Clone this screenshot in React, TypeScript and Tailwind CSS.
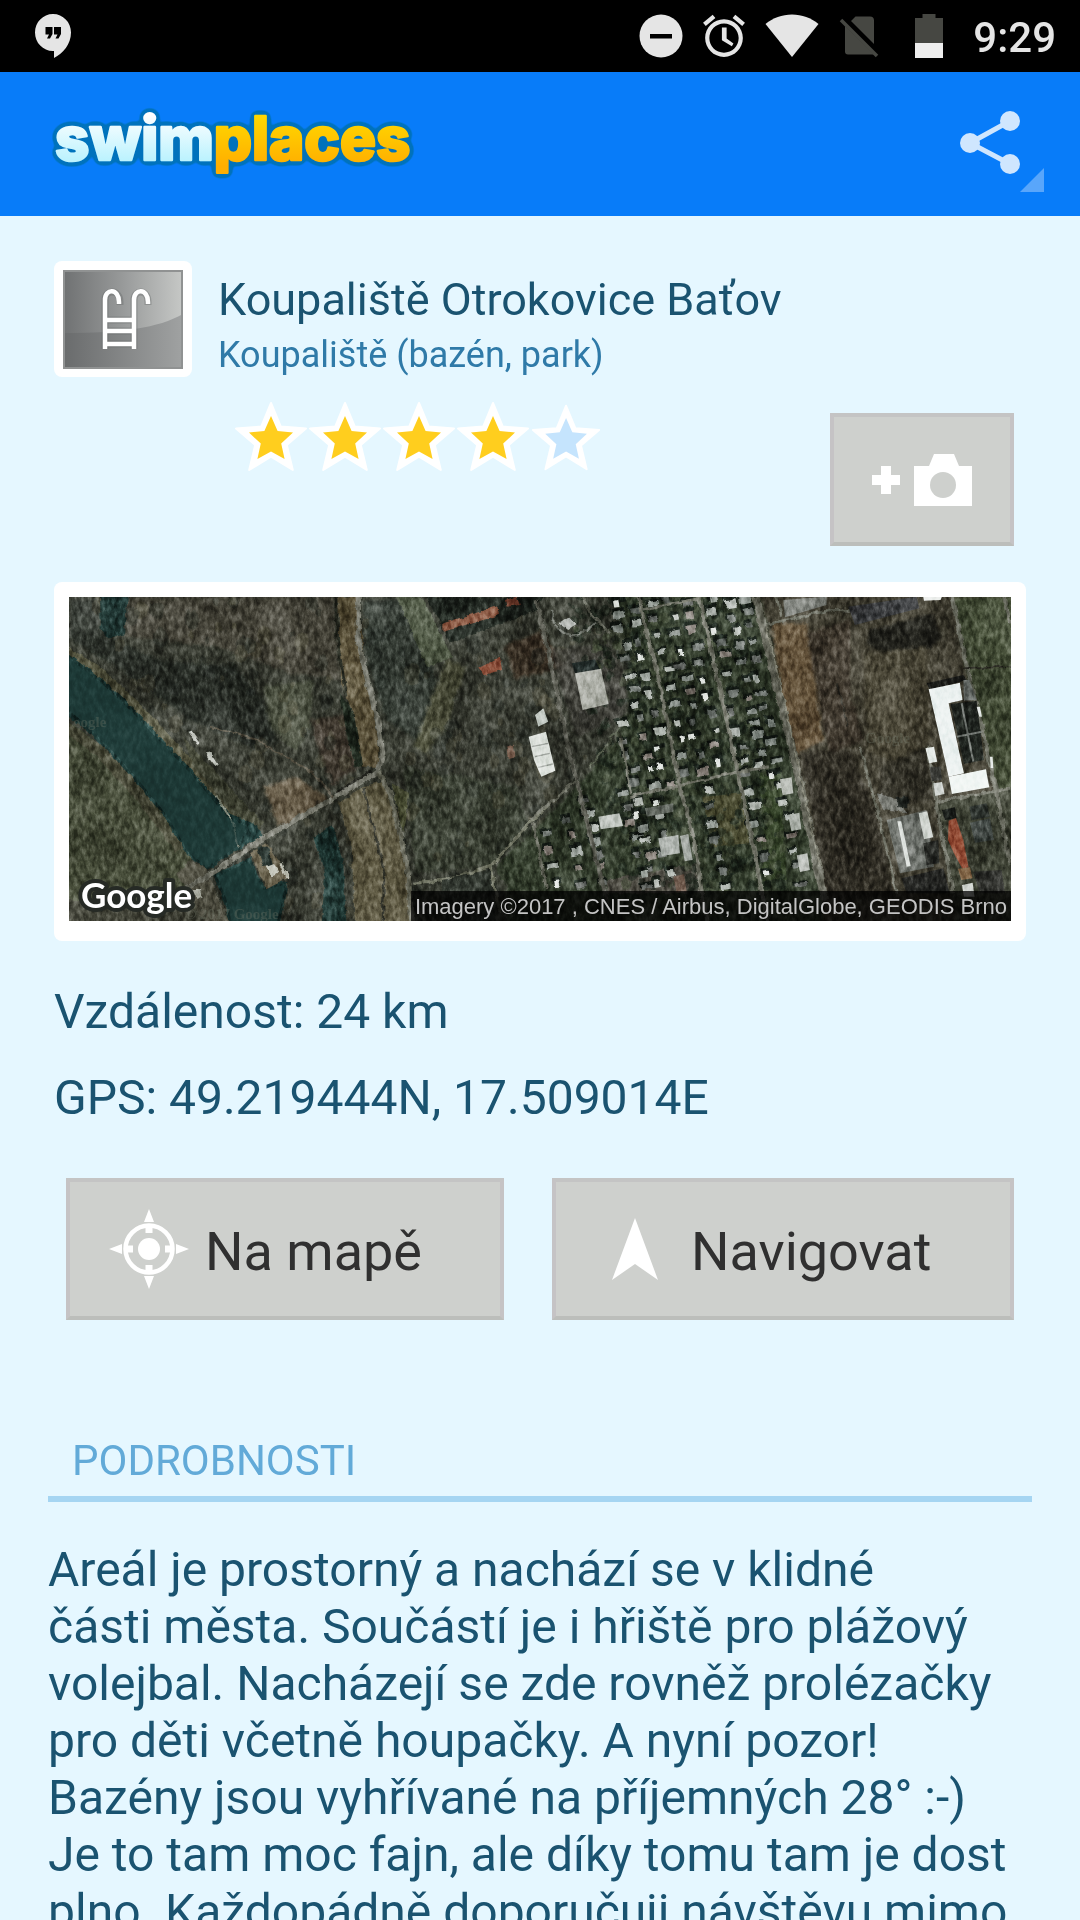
import type { ReactNode } from "react";

const STAR = "36,2 45.8,25.6 71,27.6 51.8,44 57.8,69 36,55.6 14.2,69 20.2,44 1,27.6 26.2,25.6";
const STAR_CORE = "36,15 42.6,30 58,31.6 46.2,42.6 49.6,58 36,50.4 22.4,58 25.8,42.6 14,31.6 29.4,30";

function Star({ filled }: { filled: boolean }) {
  return (
    <svg viewBox={filled ? "0 0 72 72" : "-1 -3 76 76"} className="size-[72px]" aria-hidden="true">
      <polygon points={STAR} fill="#fff" stroke="#fff" strokeWidth="2" strokeLinejoin="round" />
      <polygon points={STAR_CORE} fill={filled ? "#ffce1e" : "#c5e4fd"} />
    </svg>
  );
}

function StatusBar() {
  return (
    <div className="flex h-[72px] items-center justify-between bg-black pl-[35px] pr-6 text-[#e5e5e5]">
      <svg viewBox="0 0 36 44" className="h-11 w-9" aria-label="Hangouts">
        <path d="M18 0C8 0 0 8.200 0 18.500S8 37 18 37h1v7c9-4.500 17-14 17-25.500C36 8.200 28 0 18 0z" fill="#e5e5e5" />
        <path d="M10.500 13h7v7l-2.500 4.500h-3l2-4h-3.500zM19 13h7v7l-2.500 4.500h-3l2-4H19z" fill="#000" />
      </svg>
      <div className="flex items-center gap-5">
        <svg viewBox="0 0 44 44" className="size-11" aria-label="Nerušit">
          <circle cx="22" cy="22" r="21.500" fill="#e5e5e5" />
          <rect x="11" y="20" width="22" height="4.500" fill="#000" />
        </svg>
        <svg viewBox="2 1.500 20 21" className="h-11 w-[42px]" aria-label="Budík" fill="#e5e5e5">
          <path d="M22 5.720l-4.600-3.860-1.290 1.530 4.600 3.860L22 5.720zM7.880 3.390L6.600 1.860 2 5.710l1.290 1.530 4.590-3.850zM12.500 8H11v6l4.750 2.850.75-1.230-3.250-2.370V8zM12 4c-4.970 0-9 4.030-9 9s4.020 9 9 9c4.970 0 9-4.030 9-9s-4.030-9-9-9zm0 16c-3.870 0-7-3.130-7-7s3.130-7 7-7 7 3.130 7 7-3.130 7-7 7z" />
        </svg>
        <svg viewBox="0 0 54 44" className="h-11 w-[54px]" aria-label="Wi-Fi">
          <path d="M0.500 10C8 4 17 0.500 27 0.500S46 4 53.500 10L27 43z" fill="#e5e5e5" />
        </svg>
        <svg viewBox="0 0 40 44" className="h-11 w-10" aria-label="Bez SIM karty">
          <path d="M16.500 2.500H31a4 4 0 0 1 4 4v23.500L12 7zM6 12l29 28.500H9a3 3 0 0 1-3-3z" fill="#464742" />
          <path d="M2 6l36 36" stroke="#464742" strokeWidth="3.500" />
        </svg>
        <svg viewBox="0 0 28 44" className="ml-4 h-11 w-7" aria-label="Baterie">
          <path d="M7.500 0h13v4H28v26H0V4h7.500z" fill="#464742" />
          <rect y="29" width="28" height="15" fill="#eee" />
        </svg>
        <time className="ml-2.5 pt-1 font-medium text-[42px] leading-[50px]">9:29</time>
      </div>
    </div>
  );
}

function Logo() {
  return (
    <svg viewBox="0 0 380 84" className="h-[84px] w-[380px]" role="img" aria-label="swimplaces">
      <defs>
        <linearGradient id="ice" gradientUnits="userSpaceOnUse" x1="0" y1="12" x2="0" y2="60">
          <stop offset="0" stopColor="#ffffff" />
          <stop offset="1" stopColor="#b9f2fe" />
        </linearGradient>
        <linearGradient id="sun" gradientUnits="userSpaceOnUse" x1="0" y1="14" x2="0" y2="64">
          <stop offset="0" stopColor="#ffd800" />
          <stop offset="1" stopColor="#ffae00" />
        </linearGradient>
        <filter id="rim" x="-5%" y="-20%" width="110%" height="140%" colorInterpolationFilters="sRGB">
          <feGaussianBlur in="SourceAlpha" stdDeviation="3" result="halo" />
          <feComponentTransfer in="halo" result="edge">
            <feFuncA type="linear" slope="14" intercept="-0.700" />
          </feComponentTransfer>
          <feFlood floodColor="#0072bc" />
          <feComposite in2="edge" operator="in" result="outline" />
          <feMerge>
            <feMergeNode in="outline" />
            <feMergeNode in="SourceGraphic" />
          </feMerge>
        </filter>
      </defs>
      <text
        x="7"
        y="58"
        strokeWidth="2.500"
        strokeLinejoin="round"
        filter="url(#rim)"
        className="font-[Inter,sans-serif] text-[60px] font-extrabold"
      >
        <tspan fill="url(#ice)" stroke="url(#ice)">swim</tspan>
        <tspan fill="url(#sun)" stroke="url(#sun)">places</tspan>
      </text>
    </svg>
  );
}

function AppBar() {
  return (
    <header className="flex h-36 items-center justify-between bg-[#087cf9] pl-12 pr-9">
      <Logo />
      <button type="button" aria-label="Sdílet" className="flex">
        <svg viewBox="0 0 84 96" className="h-24 w-[84px]">
          <path d="M50 25L10 47l40 21" fill="none" stroke="#cfe6fe" strokeWidth="5" />
          <circle cx="50" cy="25" r="10" fill="#cfe6fe" />
          <circle cx="10" cy="47" r="10" fill="#cfe6fe" />
          <circle cx="50" cy="68" r="10" fill="#cfe6fe" />
          <path d="M84 72v24H60z" fill="#59a6fb" />
        </svg>
      </button>
    </header>
  );
}

function PoolIcon() {
  return (
    <svg viewBox="0 0 120 99" className="h-[99px] w-[120px]" role="img" aria-label="Koupaliště">
      <defs>
        <linearGradient id="plate">
          <stop offset="0" stopColor="#696b6c" />
          <stop offset="1" stopColor="#a0a2a2" />
        </linearGradient>
        <linearGradient id="gloss">
          <stop offset="0" stopColor="#6f7172" />
          <stop offset="0.500" stopColor="#989a9a" />
          <stop offset="1" stopColor="#c6c8c6" />
        </linearGradient>
      </defs>
      <rect width="120" height="99" fill="url(#plate)" />
      <path d="M0 0h120v44C95 58 60 63 0 63z" fill="url(#gloss)" />
      <rect x="1" y="1" width="118" height="97" fill="none" stroke="#909292" strokeWidth="2" />
      <g fill="none" stroke="#5f6162" strokeOpacity="0.350" strokeWidth="7">
        <path d="M42 79V30c0-11 15-11 15 2v3M71 79V30c0-11 14-11 14 2v3M42 50h29M42 61h29M42 74h29" />
      </g>
      <g fill="none" stroke="#fff" strokeWidth="4.500">
        <path d="M42 79V30c0-12 14-12 14 2v2M71 79V30c0-12 14-12 14 2v2M42 50h29M42 61h29M42 74h29" />
      </g>
    </svg>
  );
}

function createRandom(seed: number) {
  let s = seed;
  return () => {
    s = (s * 16807) % 2147483647;
    return s / 2147483647;
  };
}

const rand = createRandom(4217);

const roofs = ["#8f9690", "#a8aea8", "#7b817c", "#b9beb8", "#6c706c", "#8c857e", "#5e645f"];

const columns = [
  { x: 172, from: 640, to: 930 },
  { x: 205, from: 430, to: 930 },
  { x: 255, from: 70, to: 930 },
  { x: 305, from: 90, to: 640 },
  { x: 368, from: 70, to: 600 },
  { x: 418, from: 60, to: 930 },
  { x: 470, from: 70, to: 600 },
  { x: 545, from: 60, to: 930 },
  { x: 595, from: 70, to: 560 },
  { x: 640, from: 60, to: 930 },
  { x: -90, from: 760, to: 940 },
  { x: -20, from: 720, to: 940 },
  { x: 50, from: 660, to: 940 },
];

const houses = columns.flatMap((c) => {
  const list = [];
  for (let y = c.from; y < c.to; y += 34 + rand() * 26) {
    list.push({
      x: c.x + (y - 60) * 0.2 + (rand() - 0.5) * 22,
      y,
      w: 16 + rand() * 20,
      h: 12 + rand() * 13,
      color: roofs[Math.floor(rand() * roofs.length)],
      bright: rand() > 0.86,
    });
  }
  return list;
});

const shrubs = Array.from({ length: 620 }, () => ({
  x: 240 + rand() * 500,
  y: 50 + rand() * 900,
  r: 5 + rand() * 12,
  dark: rand() > 0.35,
}));

const forest = Array.from({ length: 520 }, () => ({
  x: rand() * 942,
  y: rand() * 324,
  r: 2 + rand() * 6,
  dark: rand() > 0.4,
}));

function Satellite() {
  return (
    <svg
      viewBox="0 0 942 324"
      preserveAspectRatio="xMidYMid slice"
      className="block aspect-[942/324] w-full"
      role="img"
      aria-label="Satelitní mapa okolí"
    >
      <defs>
        <filter id="rough" x="0" y="0" width="100%" height="100%" colorInterpolationFilters="sRGB">
          <feTurbulence type="fractalNoise" baseFrequency="0.12" numOctaves="3" seed="8" />
          <feDisplacementMap in="SourceGraphic" scale="5" xChannelSelector="R" yChannelSelector="G" />
        </filter>
        <filter id="grain" x="0" y="0" width="100%" height="100%" colorInterpolationFilters="sRGB">
          <feTurbulence type="fractalNoise" baseFrequency="0.22 0.12" numOctaves="4" seed="21" />
          <feColorMatrix values="1.800 0 0 0 -0.440  1.800 0 0 0 -0.440  1.800 0 0 0 -0.440  0 0 0 0 1" />
        </filter>
        <filter id="mottle" x="0" y="0" width="100%" height="100%" colorInterpolationFilters="sRGB">
          <feTurbulence type="fractalNoise" baseFrequency="0.025 0.018" numOctaves="3" seed="5" />
          <feColorMatrix values="2 0 0 0 -0.550  2 0 0 0 -0.550  2 0 0 0 -0.550  0 0 0 0 1" />
        </filter>
        <filter id="soften" x="-10%" y="-10%" width="120%" height="120%" colorInterpolationFilters="sRGB">
          <feGaussianBlur stdDeviation="5" />
        </filter>
      </defs>
      <rect width="942" height="324" fill="#3f4337" />

      <g filter="url(#rough)">
        <rect width="942" height="324" fill="#3d4036" />
        <g transform="translate(-19 -17) scale(0.3333)">
          <g filter="url(#soften)">
            <path d="M230 50L850 50L870 300L720 280L500 200L230 170z" fill="#47453a" />
            <path d="M60 60L150 60L150 160L330 240L560 260L700 440L640 520L420 420L200 260L60 180z" fill="#2f342d" />
            <path d="M640 320L790 300L780 440L740 520L660 440z" fill="#4b5040" />
            <path d="M640 620L740 590L840 660L690 750z" fill="#6a5f4b" />
            <path d="M780 420L900 400L930 560L840 620z" fill="#433c32" />
            <path d="M940 60L1060 60L1130 220L1160 300L1100 480L1010 420L950 240z" fill="#373e36" />
            <path d="M1190 240L1250 260L1190 440L1130 520L1090 500z" fill="#565843" />
            <path d="M1060 560L1400 620L1440 760L1320 860L1100 880z" fill="#3c4235" />
            <path d="M1360 200L1480 150L1540 260L1400 300z" fill="#443a2d" />
          </g>
        </g>
        {forest.map((f, i) => (
          <ellipse
            key={i}
            cx={f.x}
            cy={f.y}
            rx={f.r}
            ry={f.r * 1.3}
            fill={f.dark ? "#262b25" : "#57523f"}
            opacity="0.350"
          />
        ))}
        <g transform="translate(-19 -17) scale(0.3333)">
          <path d="M1040 50L1115 50L1210 235L1130 260L1070 120z" fill="#525b47" />
          <path d="M1130 50L1480 50L1460 90L1200 190L1150 90z" fill="#1e241e" />
          <path d="M1180 130L1345 78L1350 105L1180 155z" fill="#84503a" />
          <path d="M1365 60L1400 50L1410 75L1370 80z" fill="#7a4634" />
          <path d="M1285 265L1350 232L1356 270L1298 286z" fill="#8b4f3a" />
          <path d="M30 410L120 470L230 580L330 690L420 830L500 1040L30 1040z" fill="#4a503c" />
          <path d="M40 420L160 500L280 630L400 800L380 820L260 660L140 530L40 450z" fill="#4e4f3d" />
          <path d="M40 960L400 960L500 1030L40 1030z" fill="#45463a" />
          <path d="M40 190L150 260L270 370L380 490L500 620L600 770L560 770L440 620L300 450L160 310L40 230z" fill="#585843" />
          <path d="M400 470L640 730L620 760L540 690L430 560z" fill="#4b4e3d" />
          <path d="M30 205L160 300L250 385L330 470L430 575L540 700L620 735L640 770L560 810L470 870L415 830L350 720L270 620L190 530L110 450L30 395z" fill="#1e3a37" />
          <path d="M150 40L235 40L222 160L175 175L152 150z" fill="#182c29" />
          <path d="M490 885L600 830L640 920L712 905L705 970L680 1040L540 1040L520 960z" fill="#1e3a37" />
          <path d="M790 770L850 735L880 850L890 1040L815 1040L825 880z" fill="#1c332f" />
          <path d="M600 820L650 790L720 890L650 928z" fill="#6f6853" />
          <path d="M620 800L655 800L670 860L640 860z" fill="#2c3833" />
          <path d="M380 880L420 840L470 870L500 940L545 1040L470 1040z" fill="#5b5a4c" />
          <path d="M865 50L925 50L950 290L985 480L985 560L930 560L915 420L870 300z" fill="#61583f" />
          <path d="M870 340L910 400L940 560L915 560L890 460z" fill="#20291f" />
          <path d="M865 670L940 620L1005 600L1045 700L1085 1040L915 1040L905 800z" fill="#615c45" />
          <path d="M1025 610L1075 640L1060 760z" fill="#505439" />
          <path d="M940 625L975 760L1003 880L998 1030" fill="none" stroke="#32332a" strokeWidth="7" />
          <path d="M858 50L862 190L890 350" fill="none" stroke="#25281f" strokeWidth="10" />
          <path d="M860 640L965 572" fill="none" stroke="#24251f" strokeWidth="12" />
          <path d="M925 40L925 180L950 290L985 430L998 520L985 575L850 655L640 775L470 890L400 930" fill="none" stroke="#7c7d72" strokeWidth="16" />
          <path d="M985 575L1020 640L1050 760L1075 880L1085 1030" fill="none" stroke="#767769" strokeWidth="15" />
          <path d="M850 650L790 580L620 480L480 440" fill="none" stroke="#5a5547" strokeWidth="6" />
          <path d="M500 650L550 730L565 800" fill="none" stroke="#9a9f91" strokeWidth="6" />
          <path d="M415 458L425 455L448 488L440 492zM468 520L482 516L505 552L496 558z" fill="#c6c9c2" />
          <path d="M650 860l22-8 18 26-24 14zM688 850l10 0 20 45-12 0z" fill="#c9cac0" />
          <path d="M430 930l20 0 6 22-20 8z" fill="#b6b8ae" />
          <path d="M1372 498l20-4 4 36-20 4z" fill="#7c6252" />
          <path d="M1500 670L1440 730L1320 860L1210 895L1090 910" fill="none" stroke="#777a69" strokeWidth="9" />
          <path d="M1320 860L1350 1000M1450 740L1500 940" stroke="#777a69" strokeWidth="9" />
          <path d="M1175 900L1320 870L1340 1030L1180 1030z" fill="#343a32" />
          <path d="M1340 850L1430 790L1500 720L1500 900L1350 900z" fill="#333b2c" />
        </g>
      </g>

      <g filter="url(#rough)">
        <g transform="translate(461 -17) scale(0.3333)">
          <g filter="url(#soften)">
            <path d="M-80 840L140 620L270 470L300 250L250 40L690 40L790 500L890 1040L-60 1040z" fill="#343e2d" />
            <path d="M60 210L230 190L290 280L300 400L140 470L110 380z" fill="#42403a" opacity="0.700" />
            <path d="M690 40L1470 40L1470 1040L890 1040L790 480z" fill="#474437" />
            <path d="M725 130L830 130L880 480L800 520L760 400z" fill="#69583f" />
            <path d="M830 160L960 120L960 340L1000 480L900 520L870 380z" fill="#423b30" />
            <path d="M810 520L960 510L1040 700L1090 960L890 960L850 700z" fill="#322f26" />
            <path d="M1020 150L1210 100L1230 180L1150 240L1060 220L1010 190z" fill="#25251f" />
            <path d="M1000 220L1190 200L1200 480L1180 560L1010 520z" fill="#4d4939" />
            <path d="M1050 560L1190 500L1210 660L1050 660z" fill="#37352b" />
            <path d="M1270 50L1450 50L1450 630L1400 630L1310 290z" fill="#475039" />
            <path d="M1220 670L1450 620L1450 1040L1280 1040z" fill="#44483a" />
          </g>
          <path d="M520 650L640 640L660 790L540 800z" fill="#48492f" />
          <path d="M690 580L750 570L770 900L700 900z" fill="#344228" />
          <path d="M230 900L500 850L520 940L230 940z" fill="#545249" />
          {shrubs.map((s, i) => (
            <circle
              key={i}
              cx={s.x + (s.y - 500) * 0.2 - 40}
              cy={s.y}
              r={s.r}
              fill={s.dark ? "#1b241b" : "#505a43"}
              opacity="0.550"
            />
          ))}
          {houses.map((h, i) => (
            <g key={i} transform={"rotate(-10 " + h.x + " " + h.y + ")"}>
              <rect x={h.x - h.w / 2 - 6} y={h.y - h.h} width={h.w + 8} height={h.h} fill="#161d17" />
              <rect
                x={h.x - h.w / 2}
                y={h.y - h.h / 2}
                width={h.bright ? 16 : h.w}
                height={h.h}
                fill={h.bright ? "#e4e7e3" : h.color}
              />
            </g>
          ))}
          <g fill="none" stroke="#74766a">
            <path d="M325 50L350 160L385 290L430 520L455 640L490 770L530 1030" strokeWidth="12" />
            <path d="M508 50L545 220L590 420L625 580L670 800L715 1040" strokeWidth="12" />
            <path d="M20 60L80 330L120 530L140 600L185 780L230 960" strokeWidth="13" stroke="#63645a" />
            <path d="M678 50L730 270L790 520L835 730L885 960" strokeWidth="24" stroke="#6b6c60" />
            <path d="M705 130L765 370L815 610L870 860" strokeWidth="4" stroke="#8b8b7c" />
            <path d="M300 650L460 615L625 575L720 560" strokeWidth="9" />
            <path d="M330 90L510 55M700 135L900 90L960 95" strokeWidth="8" />
            <path d="M0 720L140 600M270 470L305 640M10 730L50 930" strokeWidth="8" />
            <path d="M270 440L180 560" strokeWidth="6" stroke="#5a6150" />
            <path d="M1265 50L1315 280L1365 480L1400 640L1440 850" strokeWidth="13" />
            <path d="M1195 500L1220 680L1270 940M1220 665L1440 625" strokeWidth="10" />
            <path d="M990 500L1050 720L1100 940" strokeWidth="8" />
            <path d="M1425 50L1440 130" strokeWidth="10" />
            <path d="M740 50L755 110" strokeWidth="8" />
            <path d="M160 50L180 100L240 160" strokeWidth="8" />
          </g>
          <path d="M1300 268L1450 258M920 310L955 440" stroke="#2d2c25" strokeWidth="5" />
          <path d="M70 90C60 150 110 170 150 165L195 130" fill="none" stroke="#747870" strokeWidth="7" />
          <path d="M85 130l30-20 25 25-25 15z" fill="#b3b7b2" />
          <path d="M1040 640l70 20 20 40-70 -10z" fill="#777972" />
          <path d="M1100 650l35 0 0 35-30 0z" fill="#202420" />
        </g>
      </g>

      <g transform="translate(461 -17) scale(0.3333)">
        <path d="M125 250L195 238L210 270L135 280z" fill="#1a2220" />
        <path d="M135 280L213 266L236 372L158 390z" fill="#aeb0a8" />
        <path d="M-4 470L48 455L76 572L34 590L12 540z" fill="#dfe3de" />
        <path d="M5 500l50-10M15 530l44-10M25 562l44-10" stroke="#a3a8a2" strokeWidth="4" />
        <path d="M15 405l25-20 15 40-30 15z" fill="#ced3ce" />
        <path d="M1190 310L1300 285L1310 300L1200 330z" fill="#1b1c19" />
        <path d="M1196 328L1290 308L1298 360L1256 370L1302 580L1256 590z" fill="#eef3f2" />
        <path d="M1256 590L1368 568L1378 622L1266 642z" fill="#f0f5f3" />
        <path d="M1262 372L1340 362L1362 540L1302 552z" fill="#222722" />
        <path d="M1295 370L1330 545M1280 470L1355 455" stroke="#7f847f" strokeWidth="6" />
        <path d="M1300 300L1318 300L1340 360L1302 362z" fill="#7c817d" />
        <path d="M1186 505L1212 500L1222 545L1198 550z" fill="#e7ebe8" />
        <path d="M1210 610l26-4 8 36-28 6z" fill="#d0d4d0" />
        <path d="M1340 380l10 0 6 30-8 0zM1380 530l8 0 2 34-8 0z" fill="#e7ebe8" />
        <path d="M1198 560L1232 560L1236 600L1205 604z" fill="#43443f" />
        <path d="M1070 720L1190 690L1212 860L1110 880z" fill="#6d716b" />
        <path d="M1102 724l12 0 28 134-12 2z" fill="#dce0dc" />
        <path d="M1166 700l26-6 18 78-28 6z" fill="#d4d8d3" />
        <path d="M1180 790L1225 780L1228 850L1190 855z" fill="#2e302c" />
        <path d="M1115 895L1240 865L1260 940L1130 940z" fill="#2b2c29" />
        <path d="M1236 690L1275 682L1280 715L1245 720z" fill="#161916" />
        <path d="M1256 722L1278 714L1300 780L1316 862L1298 868L1272 820L1254 780z" fill="#99523a" />
        <path d="M1284 866L1320 862L1328 895L1294 900z" fill="#8e7252" />
        <path d="M1296 915L1328 908L1334 950L1302 950z" fill="#d8dbd7" />
        <path d="M1318 680L1370 670L1380 710L1325 720z" fill="#343a35" />
        <path d="M1320 728L1380 715L1392 780L1335 788z" fill="#4b524e" />
        <path d="M1330 875L1415 870L1425 940L1350 940z" fill="#30312d" />
        <path d="M760 60L890 50L890 75L765 112z" fill="#7b7e78" />
        <path d="M955 80L1160 50L1168 85L975 135z" fill="#444648" />
        <path d="M1180 50L1236 50L1232 60L1182 62z" fill="#eef0ee" />
        <path d="M205 710L268 700L280 738L212 748z" fill="#bec3bd" />
        <path d="M345 685L430 670L430 695L350 710z" fill="#70766e" />
        <path d="M385 775L445 765L450 820L395 828z" fill="#b0b5b0" />
        <path d="M450 768L475 762L488 840L464 844z" fill="#a4a9a3" />
        <path d="M750 598L785 592L790 640L758 646z" fill="#b7bbb4" />
        <path d="M775 705L808 698L814 748L784 754z" fill="#b1b6af" />
        <path d="M800 826L832 820L840 870L810 876z" fill="#b7bbb5" />
        <path d="M430 890L462 882L470 935L440 938z" fill="#7d685a" />
      </g>

      <rect width="942" height="324" filter="url(#mottle)" className="mix-blend-soft-light" opacity="0.350" />
      <rect width="942" height="324" filter="url(#grain)" className="mix-blend-soft-light" opacity="0.600" />
      <g transform="translate(-19 -17) scale(0.3333)" fill="#1e3a37" opacity="0.700">
        <path d="M50 230L160 315L250 400L330 485L430 590L530 710L590 740L560 800L470 860L415 815L350 705L270 605L190 515L110 435L50 385z" />
        <path d="M505 890L595 845L640 930L702 915L695 970L675 1040L550 1040L530 960z" />
      </g>

      <g className="font-['Liberation_Serif',serif] font-bold text-[15px]" fill="#6d7466" opacity="0.350">
        <text x="4" y="130">oogle</text>
        <text x="116" y="322">© 2017 Google</text>
        <text x="796" y="146">Google</text>
      </g>
    </svg>
  );
}

function MapPreview() {
  return (
    <a href="#mapa" className="mt-9 block rounded-lg bg-white px-[15px] pb-5 pt-[15px]">
      <div className="relative overflow-hidden">
        <Satellite />
        <svg viewBox="0 0 140 56" className="absolute bottom-0 left-2 h-14 w-[140px]" role="img" aria-label="Google">
          <text
            x="4"
            y="43"
            fill="#fff"
            stroke="#262a25"
            strokeWidth="8"
            strokeLinejoin="round"
            className="font-[Lato,sans-serif] font-bold text-[35px] [paint-order:stroke]"
          >
            Google
          </text>
        </svg>
        <div className="absolute bottom-0 right-0 h-[30px] whitespace-nowrap bg-black/75 px-1 font-['Liberation_Sans',Arial,sans-serif] text-[22px] leading-[32px] text-[#c4c4c4]">
          Imagery ©2017 , CNES / Airbus, DigitalGlobe, GEODIS Brno
        </div>
      </div>
    </a>
  );
}

function ActionButton({ icon, children }: { icon: ReactNode; children: ReactNode }) {
  return (
    <button
      type="button"
      className="flex h-[142px] items-center gap-4 border-4 border-x-[#c5c3c5] border-t-[#c4c4c4] border-b-[#bcbebb] bg-[#ced0cd] pl-[39px] text-[54px] leading-[63px] text-[#303030]"
    >
      {icon}
      <span className="pt-1">{children}</span>
    </button>
  );
}

function TargetIcon() {
  return (
    <svg viewBox="0 0 80 80" className="size-20" aria-hidden="true" fill="#fff">
      <circle cx="40" cy="40" r="23.500" fill="none" stroke="#fff" strokeWidth="4.500" />
      <circle cx="40" cy="40" r="11" />
      <path d="M36.500 17h7v7h-7zM36.500 56h7v7h-7zM17 36.500h7v7h-7zM56 36.500h7v7h-7z" />
      <path d="M40 0l5 13H35zM40 80l5-13H35zM0 40l13-5v10zM80 40l-13-5v10z" />
    </svg>
  );
}

function ArrowIcon() {
  return (
    <svg viewBox="0 0 80 80" className="size-20" aria-hidden="true" fill="#fff">
      <path d="M40 9l23 62-23-16-23 16z" />
    </svg>
  );
}

export default function App() {
  return (
    <div className="min-h-screen bg-[#e5f7ff] font-[Roboto,sans-serif] text-[#1a5370]">
      <StatusBar />
      <AppBar />
      <main>
        <section className="px-[54px] pt-[45px]">
          <div className="flex gap-[26px]">
            <div className="flex h-[116px] w-[138px] shrink-0 items-center justify-center rounded-lg bg-white">
              <PoolIcon />
            </div>
            <div className="pt-3">
              <h1 className="text-[45px] leading-[53px]">Koupaliště Otrokovice Baťov</h1>
              <p className="mt-2 text-[36px] leading-[42px] text-[#2f7aa8]">Koupaliště (bazén, park)</p>
            </div>
          </div>
          <div className="mt-6 flex items-start justify-between pl-[181px] pr-3">
            <div className="flex gap-0.5" role="img" aria-label="Hodnocení 4 z 5">
              {[1, 2, 3, 4, 5].map((n) => (
                <Star key={n} filled={n <= 4} />
              ))}
            </div>
            <button
              type="button"
              aria-label="Přidat fotku"
              className="mt-3 flex h-[133px] w-[184px] items-center justify-center border-4 border-x-[#c5c3c5] border-t-[#c4c4c4] border-b-[#bcbebb] bg-[#ced0cd]"
            >
              <svg viewBox="0 0 100 52" className="h-[52px] w-[100px]" fill="#fff">
                <path d="M9 12h10v9h9v10h-9v9H9v-9H0V21h9z" />
                <path d="M42 12h15l5-12h20l5 12h13v40H42z" />
                <circle cx="71" cy="31" r="13" fill="#ced0cd" />
              </svg>
            </button>
          </div>
          <MapPreview />
          <p className="mt-[42px] text-5xl leading-[57px]">Vzdálenost: 24 km</p>
          <p className="mt-[29px] text-5xl leading-[57px]">GPS: 49.219444N, 17.509014E</p>
          <div className="mt-[52px] grid grid-cols-[438fr_462fr] gap-12 px-3">
            <ActionButton icon={<TargetIcon />}>Na mapě</ActionButton>
            <ActionButton icon={<ArrowIcon />}>Navigovat</ActionButton>
          </div>
        </section>
        <section className="px-12 pt-[116px]">
          <h2 className="border-b-[6px] border-[#a5d5f2] pb-2.5 pl-6 text-[42px] leading-[50px] text-[#62aad8]">
            PODROBNOSTI
          </h2>
          <p className="mt-[39px] text-5xl leading-[57px]">
            Areál je prostorný a nachází se v klidné
            <br />
            části města. Součástí je i hřiště pro plážový
            <br />
            volejbal. Nacházejí se zde rovněž prolézačky
            <br />
            pro děti včetně houpačky. A nyní pozor!
            <br />
            Bazény jsou vyhřívané na příjemných 28° :-)
            <br />
            Je to tam moc fajn, ale díky tomu tam je dost
            <br />
            plno. Každopádně doporučuji návštěvu mimo
          </p>
        </section>
      </main>
    </div>
  );
}
